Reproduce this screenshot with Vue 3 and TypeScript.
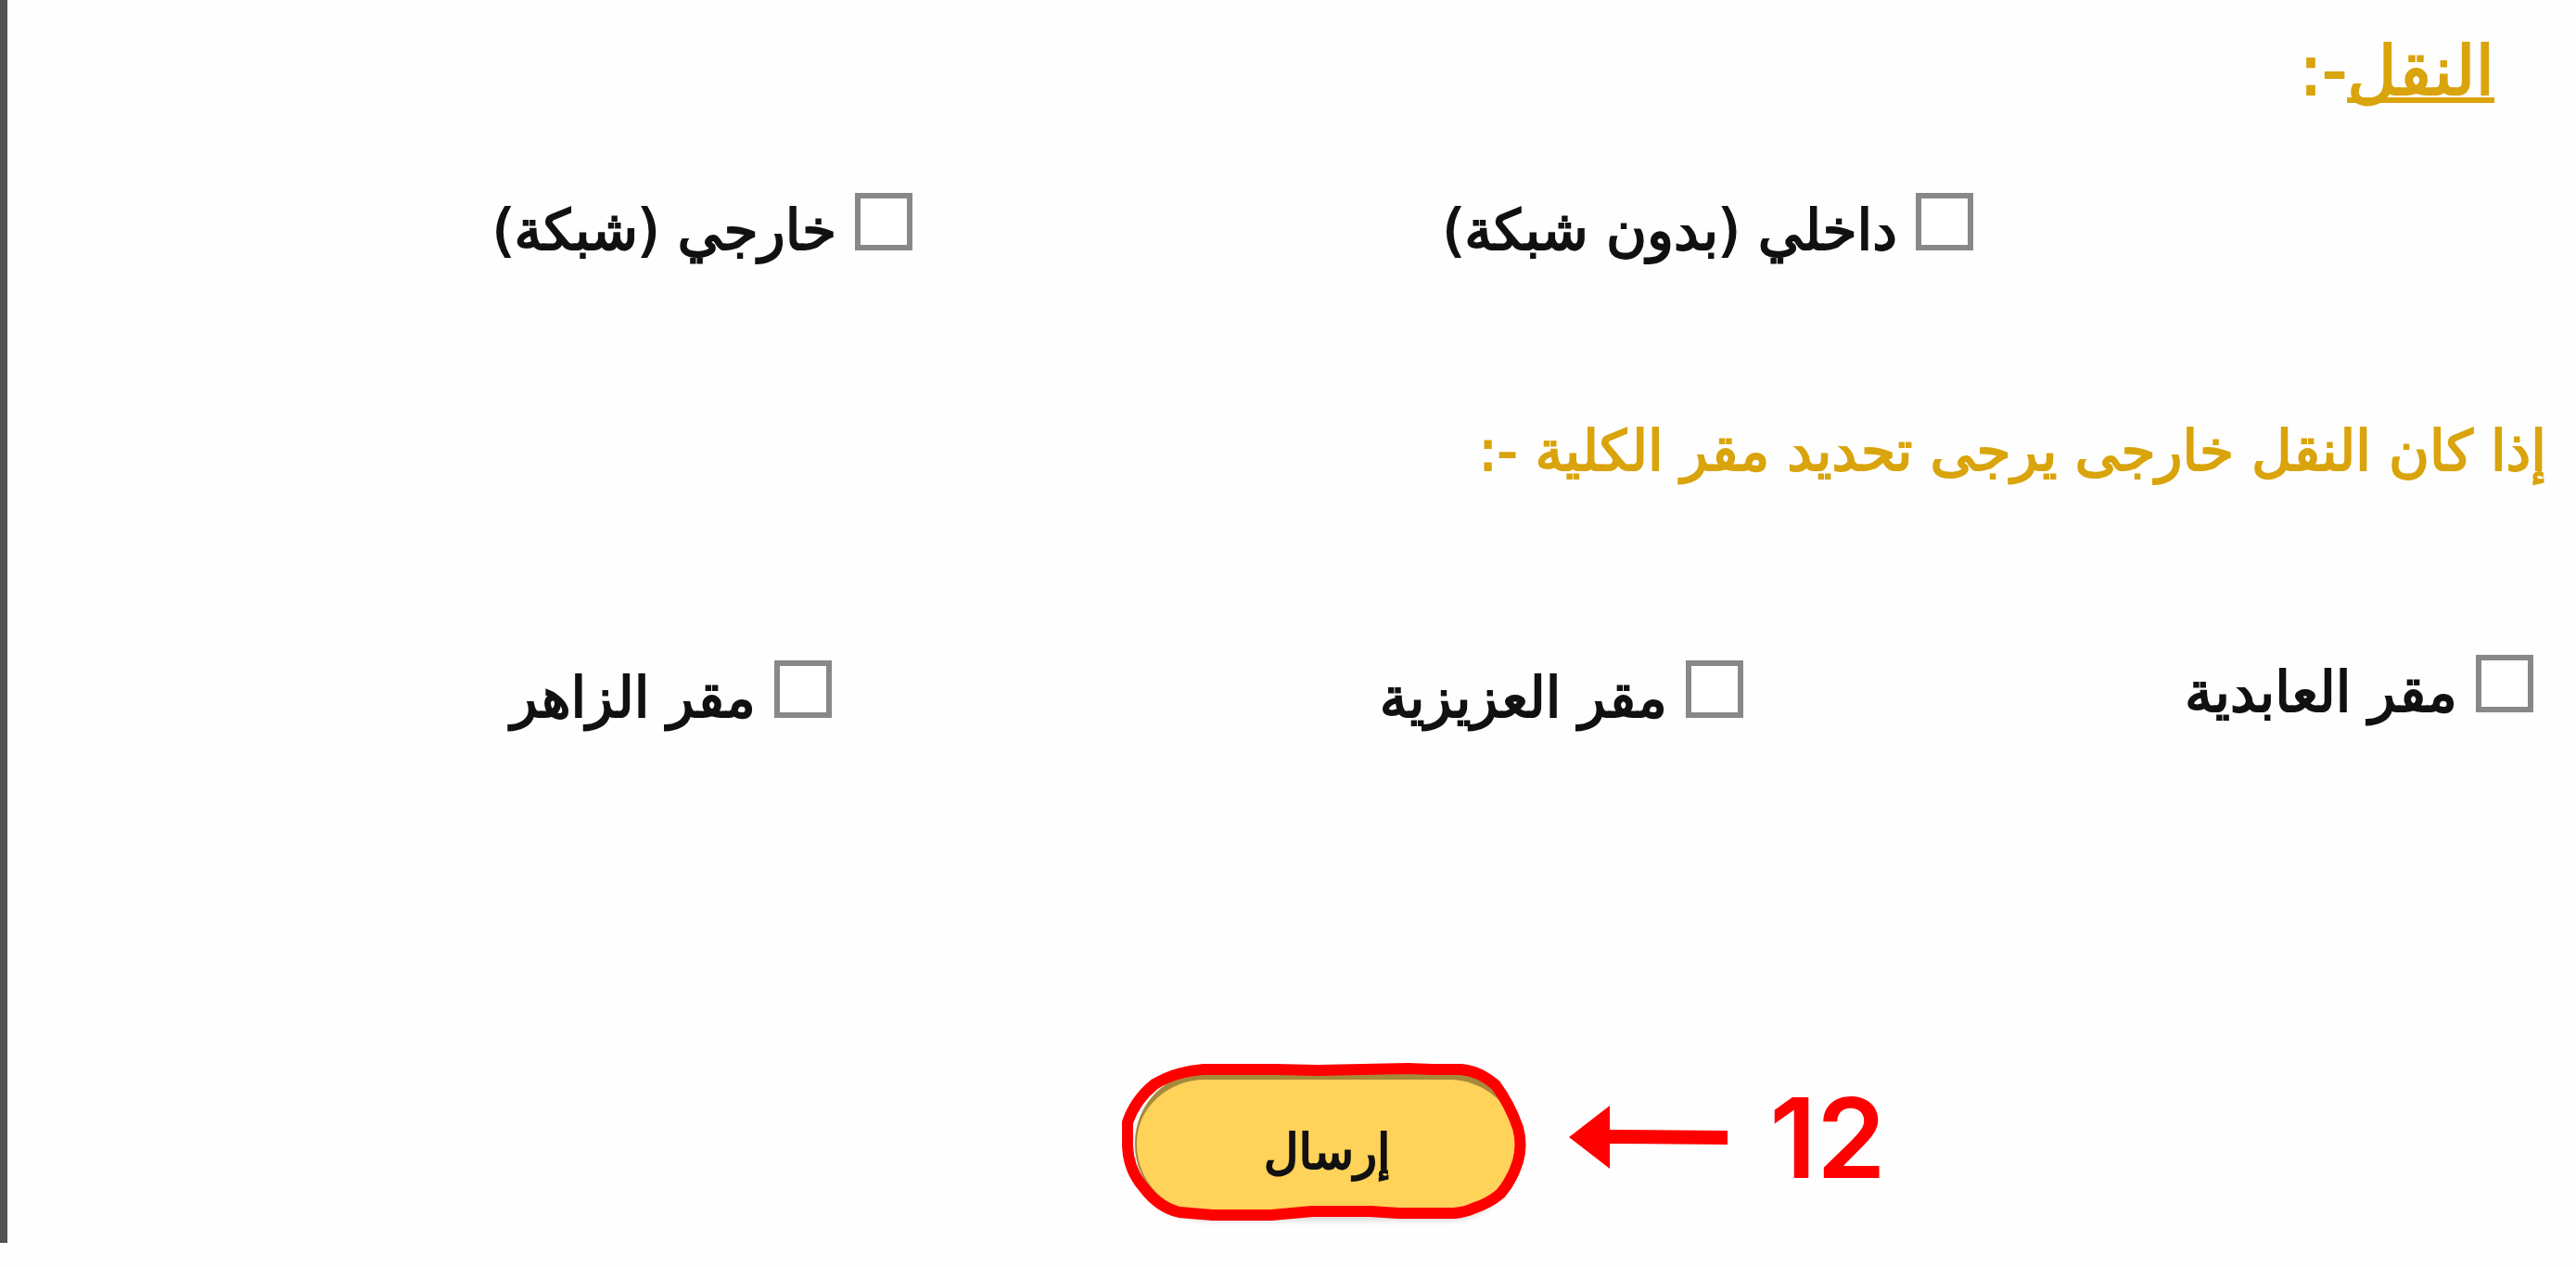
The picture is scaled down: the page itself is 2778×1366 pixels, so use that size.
<script setup lang="ts">
interface Option {
  id: string
  label: string
}

const transferTypes: Option[] = [
  { id: 'internal', label: 'داخلي (بدون شبكة)' },
  { id: 'external', label: 'خارجي (شبكة)' },
]

const campuses: Option[] = [
  { id: 'abdiyah', label: 'مقر العابدية' },
  { id: 'aziziyah', label: 'مقر العزيزية' },
  { id: 'zahir', label: 'مقر الزاهر' },
]
</script>

<template>
  <form class="form" dir="rtl" lang="ar" @submit.prevent>
    <h2 class="title"><span class="underlined">النقل</span>-:</h2>

    <div class="row types">
      <div v-for="item in transferTypes" :key="item.id" class="option">
        <input :id="item.id" type="checkbox" class="box" />
        <label :for="item.id">{{ item.label }}</label>
      </div>
    </div>

    <p class="hint">إذا كان النقل خارجى يرجى تحديد مقر الكلية -:</p>

    <div class="row campuses">
      <div v-for="item in campuses" :key="item.id" class="option">
        <input :id="item.id" type="checkbox" class="box" />
        <label :for="item.id">{{ item.label }}</label>
      </div>
    </div>

    <div class="actions" dir="ltr">
      <div class="submit-wrap">
        <button type="submit" class="submit" lang="ar">إرسال</button>
        <svg class="ring" viewBox="0 0 436 172" aria-hidden="true">
          <path
            d="M88 7 H165 L211 8 L308 6 L335 7 H366 Q386 9 403 24 Q418 44 427 70 Q432 88 427 106 Q421 126 408 141 Q396 151 381 156 Q370 161 358 162 H298 L268 160 H205 L161 164 H98 L62 161 Q40 156 24 135 Q7 116 6 90 V64 Q14 40 35 23 Q58 9 88 7 Z"
          />
        </svg>
      </div>
      <div class="callout">
        <svg class="arrow" viewBox="0 0 172 70" aria-hidden="true">
          <path d="M0 34 L44 0 V26 L171 27 V42 L44 41 V68 Z" />
        </svg>
        <span class="step">12</span>
      </div>
    </div>
  </form>
</template>

<style>
body {
  background: #fefefe;
}
</style>

<style scoped>
.form {
  padding-bottom: 22px;
  border-left: 8px solid #525252;
  color: #111;
  font-family: "DejaVu Sans", sans-serif;
  font-size: 60px;
  line-height: 80px;
  -webkit-text-stroke: 2px currentColor;
}
.title {
  margin: 0;
  padding: 32px 88px 0 0;
  color: #d9a40c;
  font-size: 74px;
  font-weight: 400;
  line-height: 88px;
}
.underlined {
  text-decoration: underline;
  text-decoration-thickness: 6px;
  text-decoration-skip-ink: none;
}
.row {
  display: grid;
}
.types {
  margin-top: 88px;
  padding-right: 650px;
  grid-template-columns: 1144fr 976fr;
}
.hint {
  margin: 158px 32px 0 0;
  color: #d9a40c;
}
.campuses {
  margin-top: 180px;
  padding-right: 46px;
  grid-template-columns: 852fr 983fr 889fr;
  align-items: end;
}
.campuses .option:first-child {
  padding-bottom: 6px;
}
.option {
  display: flex;
  align-items: flex-start;
  gap: 20px;
  white-space: nowrap;
}
.box {
  appearance: none;
  box-sizing: border-box;
  flex: none;
  width: 62px;
  height: 62px;
  margin: 0;
  border: 6px solid #888;
  background: #fff;
}
.actions {
  display: flex;
  align-items: center;
  margin-top: 354px;
  padding-left: 43.4%;
}
.submit-wrap {
  position: relative;
  box-sizing: border-box;
  width: 436px;
  height: 172px;
  padding: 10px 8px 8px 14px;
}
.submit {
  width: 100%;
  height: 100%;
  padding: 12px 0 0;
  border: 2px solid #a68a3c;
  border-top-width: 8px;
  border-radius: 76px;
  background: #ffd25a;
  box-shadow: 0 6px 6px rgb(0 0 0 / 15%);
  color: #111;
  font: inherit;
  font-size: 52px;
}
.ring {
  position: absolute;
  inset: 0;
  overflow: visible;
  pointer-events: none;
}
.ring path {
  fill: none;
  stroke: #f00;
  stroke-width: 12;
  stroke-linejoin: round;
}
.callout {
  display: flex;
  align-items: center;
  gap: 44px;
  padding: 0 0 10px 46px;
}
.arrow {
  width: 172px;
  height: 70px;
  fill: #f00;
}
.step {
  color: #f00;
  font-family: Inter, sans-serif;
  font-size: 120px;
  font-weight: 600;
  line-height: 128px;
  -webkit-text-stroke: 0;
}
</style>
